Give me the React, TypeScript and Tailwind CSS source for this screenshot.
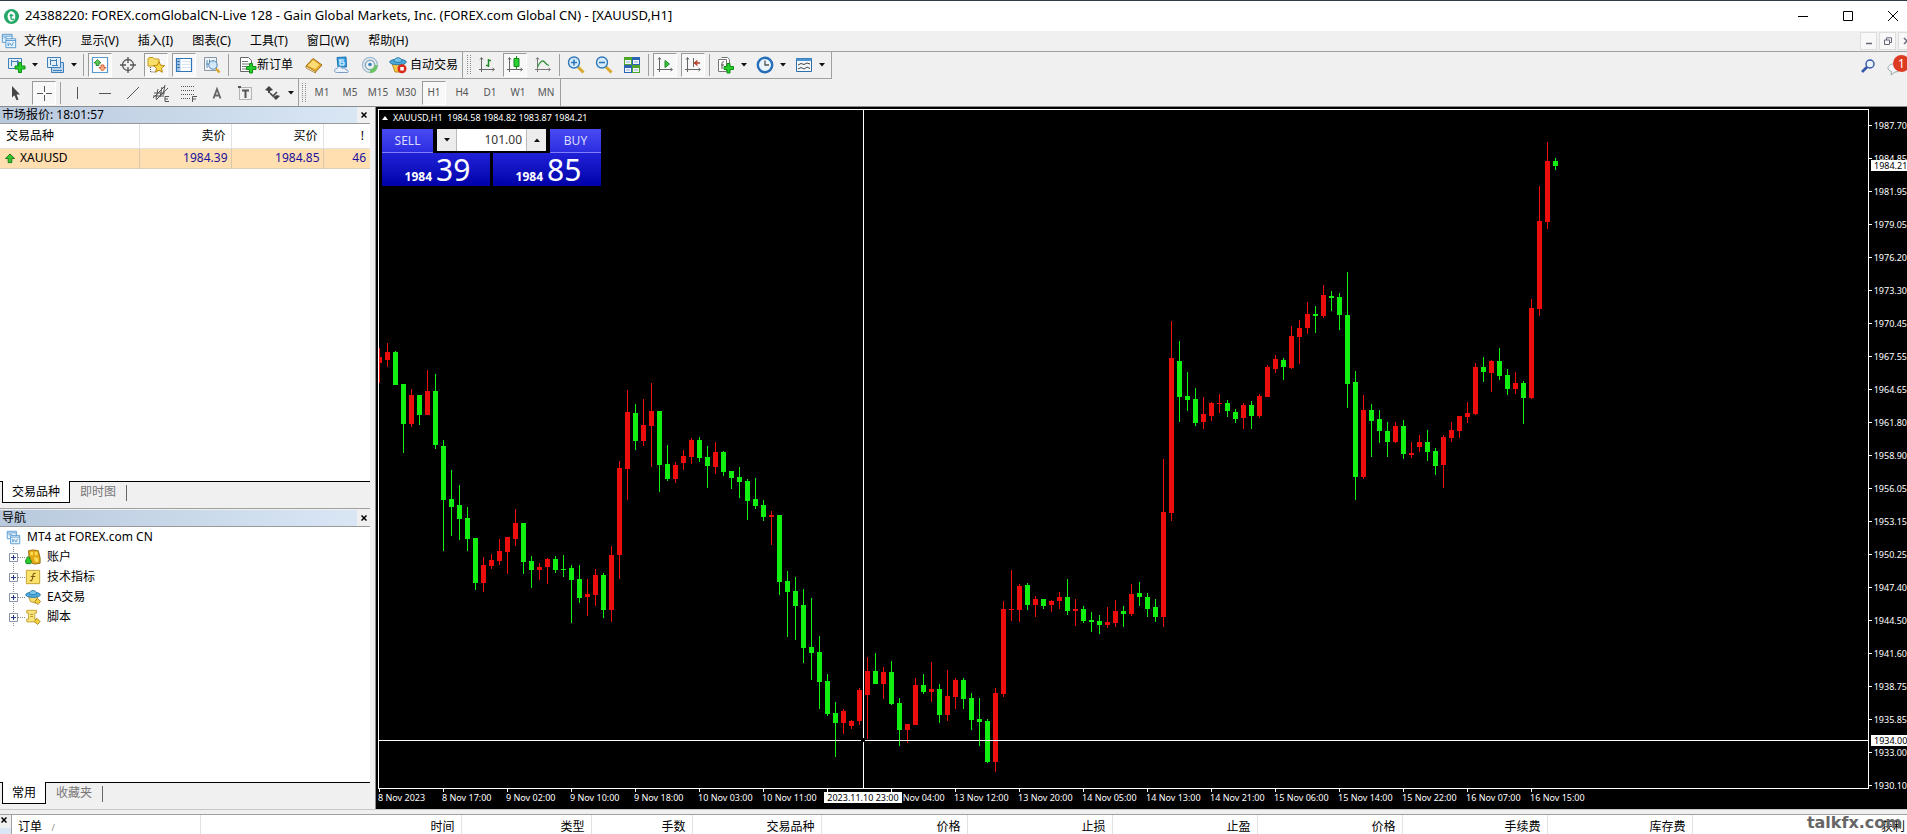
import type { ReactNode } from "react";

type Dir = "up" | "down";
type Candle = [high: number, top: number, bottom: number, low: number, dir: Dir];

const PLOT_TOP = 110;
const STEP = 8;

// one entry per hour, in screen rows
const candles: Candle[] = [
  [348, 357, 363, 383, "up"], [343, 352, 360, 367, "up"], [351, 352, 385, 385, "down"], [384, 384, 424, 453, "down"],
  [389, 395, 424, 427, "up"], [395, 395, 415, 425, "down"], [370, 391, 415, 415, "up"], [374, 391, 445, 449, "down"],
  [440, 446, 500, 551, "down"], [470, 499, 507, 536, "down"], [485, 505, 519, 540, "down"], [507, 518, 539, 551, "down"],
  [538, 538, 583, 590, "down"], [557, 565, 583, 592, "up"], [554, 560, 566, 569, "up"], [539, 551, 561, 565, "up"],
  [537, 537, 552, 574, "up"], [509, 523, 539, 546, "up"], [523, 523, 562, 574, "down"], [556, 561, 570, 588, "down"],
  [563, 567, 570, 580, "up"], [558, 559, 567, 584, "up"], [556, 559, 570, 573, "down"], [555, 569, 570, 577, "down"],
  [565, 568, 580, 623, "down"], [565, 579, 598, 603, "down"], [579, 594, 597, 616, "up"], [569, 575, 595, 606, "up"],
  [573, 575, 610, 618, "down"], [546, 555, 610, 622, "up"], [461, 468, 555, 579, "up"], [390, 412, 469, 500, "up"],
  [404, 413, 441, 450, "down"], [399, 425, 441, 446, "up"], [383, 411, 426, 467, "up"], [411, 411, 465, 492, "down"],
  [445, 464, 479, 481, "down"], [462, 465, 479, 483, "up"], [450, 456, 463, 470, "up"], [438, 440, 457, 464, "up"],
  [437, 440, 458, 462, "down"], [446, 457, 466, 488, "down"], [442, 452, 467, 474, "up"], [451, 452, 472, 476, "down"],
  [471, 471, 478, 489, "down"], [467, 477, 482, 498, "down"], [479, 481, 501, 520, "down"], [478, 499, 506, 509, "down"],
  [500, 505, 517, 521, "down"], [511, 515, 517, 545, "up"], [515, 515, 582, 595, "down"], [571, 581, 592, 637, "down"],
  [577, 591, 606, 640, "down"], [589, 605, 648, 663, "down"], [598, 647, 653, 680, "down"], [636, 652, 682, 709, "down"],
  [674, 681, 714, 716, "down"], [702, 713, 723, 757, "down"], [709, 711, 723, 734, "up"], [720, 721, 726, 729, "up"],
  [688, 690, 721, 725, "up"], [657, 671, 695, 739, "up"], [653, 671, 684, 684, "down"], [667, 672, 684, 699, "up"],
  [661, 672, 704, 705, "down"], [698, 703, 730, 746, "down"], [724, 724, 730, 743, "up"], [678, 685, 725, 725, "up"],
  [674, 685, 692, 694, "down"], [662, 689, 692, 702, "up"], [684, 689, 715, 723, "down"], [670, 696, 715, 721, "up"],
  [678, 680, 697, 709, "up"], [678, 680, 699, 709, "down"], [693, 698, 720, 730, "down"], [698, 719, 722, 746, "down"],
  [719, 721, 762, 763, "down"], [688, 693, 762, 772, "up"], [601, 609, 694, 697, "up"], [570, 609, 610, 621, "up"],
  [584, 586, 610, 622, "up"], [583, 585, 605, 610, "down"], [596, 599, 605, 617, "up"], [599, 599, 606, 609, "down"],
  [600, 601, 605, 612, "up"], [592, 597, 601, 609, "up"], [579, 597, 611, 615, "down"], [599, 609, 611, 626, "up"],
  [606, 609, 621, 623, "down"], [612, 620, 622, 632, "down"], [615, 621, 625, 634, "down"], [607, 622, 625, 628, "up"],
  [600, 611, 623, 627, "up"], [606, 611, 614, 627, "down"], [584, 594, 614, 616, "up"], [582, 593, 597, 606, "down"],
  [593, 597, 609, 617, "down"], [599, 607, 617, 622, "down"], [459, 512, 617, 627, "up"], [321, 358, 513, 521, "up"],
  [341, 361, 397, 422, "down"], [372, 396, 400, 411, "down"], [388, 399, 423, 426, "down"], [397, 414, 422, 429, "up"],
  [402, 403, 416, 421, "up"], [394, 403, 404, 413, "up"], [400, 403, 411, 417, "down"], [409, 412, 419, 423, "down"],
  [403, 405, 418, 429, "up"], [401, 405, 416, 429, "down"], [394, 396, 416, 418, "up"], [365, 367, 397, 397, "up"],
  [355, 359, 369, 373, "up"], [358, 360, 367, 380, "down"], [326, 336, 368, 369, "up"], [320, 328, 337, 364, "up"],
  [302, 314, 328, 334, "up"], [306, 314, 316, 333, "down"], [285, 295, 316, 318, "up"], [291, 296, 298, 311, "down"],
  [293, 297, 315, 330, "down"], [272, 315, 384, 408, "down"], [371, 382, 477, 500, "down"], [395, 410, 477, 479, "up"],
  [404, 410, 421, 457, "down"], [410, 419, 431, 443, "down"], [422, 431, 442, 457, "down"], [422, 426, 442, 443, "up"],
  [420, 426, 454, 459, "down"], [442, 453, 455, 458, "up"], [435, 442, 447, 452, "up"], [430, 442, 452, 461, "down"],
  [448, 451, 466, 475, "down"], [435, 437, 465, 488, "up"], [422, 430, 438, 442, "up"], [416, 416, 431, 438, "up"],
  [402, 413, 417, 423, "up"], [363, 367, 414, 415, "up"], [357, 367, 372, 382, "down"], [360, 361, 373, 392, "up"],
  [348, 361, 376, 380, "down"], [369, 375, 389, 395, "down"], [372, 383, 389, 394, "up"], [381, 383, 398, 424, "down"],
  [299, 308, 398, 399, "up"], [186, 221, 309, 316, "up"], [142, 161, 222, 229, "up"], [158, 161, 166, 170, "down"],
];

const prices = [
  "1987.70", "1984.85", "1981.95", "1979.05", "1976.20", "1973.30", "1970.45",
  "1967.55", "1964.65", "1961.80", "1958.90", "1956.05", "1953.15", "1950.25",
  "1947.40", "1944.50", "1941.60", "1938.75", "1935.85", "1933.00", "1930.10",
];

const times = [
  "8 Nov 2023", "8 Nov 17:00", "9 Nov 02:00", "9 Nov 10:00", "9 Nov 18:00",
  "10 Nov 03:00", "10 Nov 11:00", "10 Nov 19:00", "13 Nov 04:00", "13 Nov 12:00",
  "13 Nov 20:00", "14 Nov 05:00", "14 Nov 13:00", "14 Nov 21:00", "15 Nov 06:00",
  "15 Nov 14:00", "15 Nov 22:00", "16 Nov 07:00", "16 Nov 15:00",
];

const menus = ["文件(F)", "显示(V)", "插入(I)", "图表(C)", "工具(T)", "窗口(W)", "帮助(H)"];
const periods = ["M1", "M5", "M15", "M30", "H1", "H4", "D1", "W1", "MN"];

const navTree = [
  { label: "账户", icon: "accounts" },
  { label: "技术指标", icon: "indicator" },
  { label: "EA交易", icon: "expert" },
  { label: "脚本", icon: "script" },
];

const orderColumns = [
  { label: "时间", width: "w-[261px]" },
  { label: "类型", width: "w-[130px]" },
  { label: "手数", width: "w-[101px]" },
  { label: "交易品种", width: "w-[129px]" },
  { label: "价格", width: "w-[146px]" },
  { label: "止损", width: "w-[145px]" },
  { label: "止盈", width: "w-[145px]" },
  { label: "价格", width: "w-[145px]" },
  { label: "手续费", width: "w-[145px]" },
  { label: "库存费", width: "w-[145px]" },
];

const icons: Record<string, ReactNode> = {
  windows: (
    <g fill="#e8f3fc" stroke="#4c93cc">
      <path d="M1.500 1.500h11v9h-11z" />
      <path d="M1.500 3.500h11M3 6l2-1 2 1" fill="none" />
      <path d="M5.500 6.500h11v10h-11z" />
      <path d="M5.500 8.500h11M8 10.500v4l2-3 2 3 2-4" fill="none" />
    </g>
  ),
  newChart: (
    <>
      <path d="M.5 2.500h13v10H.5z" fill="#e3effa" stroke="#3f7fb5" />
      <path d="M3.500 4v6M3 5.500h8M9.500 4v6" stroke="#3f7fb5" fill="none" />
      <path d="M10.500 6.500h3v3.500h3.500v3h-3.500v3.500h-3V13H7v-3h3.500z" fill="#25d02c" stroke="#118c17" />
    </>
  ),
  profiles: (
    <>
      <path d="M4.500 6.500h12v10h-12z" fill="#b9d7f0" stroke="#3f7fb5" />
      <path d="M.5 1.500h13v10H.5z" fill="#e3effa" stroke="#3f7fb5" />
      <path d="M3.500 3v6M3 4.500h7M9.500 3v6M5 9.500h6M6 14.500h9" stroke="#3f7fb5" fill="none" />
    </>
  ),
  market: (
    <>
      <path d="M1.500 1.500h15v15h-15z" fill="#fff" stroke="#5a9bd4" strokeWidth="1.200" />
      <path d="M6.500 3.500l3.500 3.500H8v2.500H5V7H3z" fill="#5cc95a" stroke="#157c19" strokeWidth=".8" />
      <path d="M11.500 15l-3.500-3.500h2V9h3v2.500h2z" fill="#fbb084" stroke="#c7451a" strokeWidth=".8" />
    </>
  ),
  target: (
    <g fill="none" stroke="#555" strokeWidth="1.300">
      <circle cx="9" cy="9" r="5.500" />
      <path d="M9 1v6M9 11v6M1 9h6M11 9h6" />
    </g>
  ),
  folderStar: (
    <>
      <path d="M1 3l1-1.500h4L7.500 3H12v7H1z" fill="#f8de6a" stroke="#c59a1c" />
      <path d="M3.500 11v5h5" stroke="#555" strokeDasharray="1 1" fill="none" />
      <path d="M12 5.500l1.600 3.700 3.900.4-3 2.700.9 4-3.400-2.100-3.500 2.100 1-4-3-2.700 3.900-.4z" fill="#fbd84a" stroke="#b9880f" />
    </>
  ),
  terminal: (
    <>
      <path d="M1.500 2.500h15v13h-15z" fill="#fff" stroke="#2f73b8" strokeWidth="1.200" />
      <path d="M2 3h3.500v12H2z" fill="#9cc3e8" />
      <path d="M7 5.500h9M7 8.500h9M7 11.500h9" stroke="#d8e5f2" />
      <path d="M2.500 5.500h2M2.500 8.500h2M2.500 11.500h2" stroke="#24588f" />
    </>
  ),
  tester: (
    <>
      <path d="M1.500 1.500h12v13h-12z" fill="#f1f4f7" stroke="#8796a5" />
      <path d="M4 4v8M3 8h3M6.500 3.500v3M10 4v4" stroke="#5a8cb5" fill="none" />
      <circle cx="10" cy="9" r="4.200" fill="#cfe7fb" fillOpacity=".85" stroke="#5588bb" />
      <path d="M13 12.500l3.500 4" stroke="#dba82c" strokeWidth="2.400" />
    </>
  ),
  newOrder: (
    <>
      <path d="M1.500 1.500h8l3 3v11h-11z" fill="#fff" stroke="#666" />
      <path d="M3 5.500h6M3 8h7M3 10.500h4M3 13h4" stroke="#777" />
      <path d="M10.500 7.500h3v3h3.500v3h-3.500v3.500h-3V13.500H7.500v-3h3z" fill="#25d02c" stroke="#118c17" />
    </>
  ),
  book: (
    <>
      <path d="M1 10l7-7.500 9 6.500-6.500 7z" fill="#e9ae2e" stroke="#9b6810" />
      <path d="M3 9.500l5.200-5.200 6 4.400-4 4.300z" fill="#fbdc77" />
      <path d="M1 10v2l9.500 5v-1.500z" fill="#fff2c0" stroke="#9b6810" strokeWidth=".7" />
    </>
  ),
  vps: (
    <>
      <path d="M4 1.500l9-.5.500 10H5z" fill="#3aa3e6" stroke="#1d71ae" />
      <path d="M6 4h5M7 4v5h4V6H7" stroke="#fff" fill="none" />
      <path d="M3.500 16.500c-3-.5-2.500-4 .5-4 1-2.500 4-2.500 5 0 2-1 4 0 4 1.500 3 0 3 2.500 1 2.500z" fill="#e9f1fa" stroke="#7d9cc4" />
    </>
  ),
  signal: (
    <>
      <circle cx="9" cy="9" r="7.500" fill="none" stroke="#a9bfd4" strokeWidth="1.500" />
      <circle cx="9" cy="9" r="4.700" fill="none" stroke="#7fa9c4" strokeWidth="1.500" />
      <path d="M9 9v8c5 0 7.500-3 7.500-8l-3 0c0 3-1.500 4-4.500 4z" fill="#6fc466" />
      <circle cx="9" cy="8.500" r="1.800" fill="#3b82b8" />
    </>
  ),
  autoTrade: (
    <>
      <path d="M3 7.500l3 8.500h6l3-8.500z" fill="#f5c944" stroke="#b68a17" />
      <ellipse cx="9" cy="6" rx="8.300" ry="2.800" fill="#4fa9da" stroke="#2a7aab" />
      <path d="M5 5.500c0-5 8-5 8 0-2 1.200-6 1.200-8 0z" fill="#7cc6ec" stroke="#2a7aab" />
      <circle cx="13" cy="12.700" r="4.500" fill="#d92a1c" />
      <path d="M11.300 11h3.500v3.500h-3.500z" fill="#fff" />
    </>
  ),
  bars: (
    <>
      <path d="M3.500 2v14M1 13.500h15M2 3.500l1.500-2L5 3.500M14.500 12l2 1.500-2 1.500" stroke="#666" fill="none" />
      <path d="M10.500 3v8M8 9.500h2.500M10.500 4.500H13" stroke="#238a2b" strokeWidth="1.500" fill="none" />
    </>
  ),
  candle: (
    <>
      <path d="M3.500 2v14M1 13.500h15M2 3.500l1.500-2L5 3.500M14.500 12l2 1.500-2 1.500" stroke="#666" fill="none" />
      <path d="M10.500 0v13" stroke="#178a1e" />
      <path d="M8 2.500h5v8H8z" fill="#27cf31" stroke="#148a1a" />
    </>
  ),
  line: (
    <>
      <path d="M3.500 2v14M1 13.500h15M2 3.500l1.500-2L5 3.500M14.500 12l2 1.500-2 1.500" stroke="#777" fill="none" />
      <path d="M3.500 11c2-5 5-7.500 7-5 1.500 2 3 3 4.500 3.500" stroke="#3a9440" strokeWidth="1.300" fill="none" />
    </>
  ),
  zoomIn: (
    <>
      <path d="M11 11l5.500 5.500" stroke="#d9a92d" strokeWidth="3" />
      <circle cx="7" cy="6.500" r="5.500" fill="#d6ecfd" stroke="#2f78b8" strokeWidth="1.400" />
      <path d="M4 6.500h6M7 3.500v6" stroke="#2f78b8" strokeWidth="1.600" />
    </>
  ),
  zoomOut: (
    <>
      <path d="M11 11l5.500 5.500" stroke="#d9a92d" strokeWidth="3" />
      <circle cx="7" cy="6.500" r="5.500" fill="#d6ecfd" stroke="#2f78b8" strokeWidth="1.400" />
      <path d="M4 6.500h6" stroke="#2f78b8" strokeWidth="1.600" />
    </>
  ),
  tiles: (
    <>
      <path d="M1 1h8v8H1zM9 9h8v8H9z" fill="#4fa52a" />
      <path d="M9 1h8v8H9zM1 9h8v8H1z" fill="#2d62b5" />
      <path d="M2 4h6v4H2zM10 4h6v4h-6zM2 12h6v4H2zM10 12h6v4h-6z" fill="#eef5fb" />
      <path d="M3 6h4M11 6h4M3 14h4M11 14h4" stroke="#9ab4cf" />
    </>
  ),
  autoScroll: (
    <>
      <path d="M3.500 2v14M1 13.500h15M2 3.500l1.500-2L5 3.500M14.500 12l2 1.500-2 1.500" stroke="#666" fill="none" />
      <path d="M9 4.500l4.500 3.500L9 11.500z" fill="#3cc344" stroke="#1a8a20" />
    </>
  ),
  shift: (
    <>
      <path d="M3.500 2v14M1 13.500h15M2 3.500l1.500-2L5 3.500M14.500 12l2 1.500-2 1.500M9.500 2v9" stroke="#666" fill="none" />
      <path d="M10.500 7H16M13.500 4.500L10.500 7l3 2.500" stroke="#b33a20" strokeWidth="1.300" fill="none" />
    </>
  ),
  addIndicator: (
    <>
      <path d="M1.500 3.500h8v12h-8zM4.500 1.500h6l2 2v9" fill="#fff" stroke="#777" />
      <path d="M7 6c-2-1-2 1-2 3v4M4 9h3" stroke="#555" fill="none" />
      <path d="M10 7.500h3v3h3.500v3H13v3.500h-3v-3.500H7v-3h3z" fill="#25d02c" stroke="#118c17" />
    </>
  ),
  clock: (
    <>
      <circle cx="9" cy="9" r="7.200" fill="#eaf4fc" stroke="#266eb8" strokeWidth="2.400" />
      <path d="M9 4.500V9h4" stroke="#555" strokeWidth="1.300" fill="none" />
    </>
  ),
  template: (
    <>
      <path d="M1.500 2.500h15v13h-15z" fill="#f3f8fc" stroke="#2f6da8" />
      <path d="M1.500 2.500h15v2.500h-15z" fill="#4c93d2" />
      <path d="M3 9l3-1.500 3 1 3-1.500 3 1M3 13l3-1.500 3 1.500 3-2 3 1.500" stroke="#444" fill="none" />
    </>
  ),
  cursor: <path d="M5 2l8 8.500H9.500l2 5-2 .8-2-5L5 13.500z" fill="#444" />,
  cross: <path d="M9.500 2v6M9.500 11v6M2 9.500h6M11 9.500h6" stroke="#555" />,
  vline: <path d="M9.500 3v12" stroke="#555" />,
  hline: <path d="M3 9.500h12" stroke="#555" />,
  trend: <path d="M3 15L15 3" stroke="#555" />,
  channel: (
    <>
      <path d="M1 14L13 2M4 16L16 4M2 9h11M1 12h11M6 5l-2 10M10 3L8 13M13 1l-2 10" stroke="#555" fill="none" />
      <path d="M17 12.500h-4v5h4M13 15h3" stroke="#555" fill="none" />
    </>
  ),
  fibo: (
    <>
      <path d="M1 2.500h14M1 6.500h14M1 10.500h14M1 14.500h9" stroke="#555" strokeDasharray="1 1" fill="none" />
      <path d="M17 12.500h-4.500V18M12.500 15H16" stroke="#555" fill="none" />
    </>
  ),
  text: <path d="M5.500 14.500L9 5l3.500 9.500M7 11.500h4" stroke="#666" strokeWidth="1.800" fill="none" />,
  label: (
    <>
      <path d="M3.500 3.500h12v12h-12z" stroke="#777" strokeDasharray="1 1" fill="none" />
      <path d="M6 6.500h7M9.500 6v8" stroke="#555" strokeWidth="2" />
      <path d="M2 2h3v2H2z" fill="#555" />
    </>
  ),
  arrows: (
    <>
      <path d="M1 6l4-4 4 4-3 1v2H4V7zM9 13l3 3 4-4-3-1" fill="#444" />
      <path d="M6 9l3 3 4-4" stroke="#444" strokeWidth="1.600" fill="none" />
    </>
  ),
  accounts: (
    <>
      <path d="M4 2l5-1 6 1 2 8v6l-6 1-6-2z" fill="#e2a714" stroke="#94690a" />
      <path d="M6 3h3v4H6zM11 3h3v4h-3zM10 9l5 1v5l-4-1z" fill="#fbdc55" />
      <path d="M2 9.500c2-2 4 0 3.500 2 2 1 2 4 .5 5H1.500C0 15 .5 12 2 11z" fill="#2cc92f" stroke="#15801a" />
    </>
  ),
  indicator: (
    <>
      <path d="M1.500 1.500h15v15h-15z" fill="#fbe26a" stroke="#c19a28" />
      <path d="M12 5c-2.500-1-3 1-3.300 4S7.500 14 5.500 13M6.500 8.500h5" stroke="#7a5a10" strokeWidth="1.200" fill="none" />
    </>
  ),
  expert: (
    <>
      <path d="M4 8l2 6 6 2 2-7z" fill="#f6dc6f" stroke="#b6922b" />
      <ellipse cx="9" cy="6.500" rx="8.300" ry="3" fill="#4fa9da" stroke="#2a7aab" />
      <path d="M5 5.500c0-5 8-5 8 0-2 1.200-6 1.200-8 0z" fill="#7cc6ec" stroke="#2a7aab" />
      <path d="M14 10.500l3.500 3.500-3 3.500L11 14z" fill="#f2cf3c" stroke="#a98418" />
    </>
  ),
  script: (
    <>
      <path d="M2 1.500h11v3h-2v7h2v3H2v-3h2v-7H2z" fill="#fae57c" stroke="#bf9c2d" />
      <path d="M6 6h3M6 8.500h3" stroke="#a98418" />
      <path d="M13.500 10.500L17 14l-3 3.500L10.500 14z" fill="#f2cf3c" stroke="#a98418" />
    </>
  ),
};

function Icon({ name, className = "h-[18px] w-[18px]" }: { name: string; className?: string }) {
  return (
    <svg viewBox="0 0 18 18" className={`shrink-0 ${className}`} aria-hidden="true">
      {icons[name]}
    </svg>
  );
}

function Caret() {
  return (
    <svg viewBox="0 0 6 4" className="h-[4px] w-[6px] shrink-0" aria-hidden="true">
      <path d="M0 0h6L3 3.500z" fill="#111" />
    </svg>
  );
}

function Tool({ name, active = false }: { name: string; active?: boolean }) {
  return (
    <button
      type="button"
      aria-label={name}
      aria-pressed={active}
      className={`flex h-6 w-6 items-center justify-center ${
        active ? "border border-r-white border-b-white border-t-[#9a9a9a] border-l-[#9a9a9a] bg-[#f8f8f8]" : ""
      }`}
    >
      <Icon name={name} />
    </button>
  );
}

function DropTool({ name }: { name: string }) {
  return (
    <button type="button" aria-label={name} className="flex h-6 w-[35px] items-center justify-between pl-[3px] pr-[2px]">
      <Icon name={name} />
      <Caret />
    </button>
  );
}

function Grip() {
  return (
    <svg className="h-5 w-[5px] shrink-0" aria-hidden="true">
      <path d="M1.500 0v20M4.500 0v20" stroke="#8c8c8c" strokeDasharray="1 1" />
    </svg>
  );
}

function Divider() {
  return <span className="h-[22px] w-px shrink-0 bg-[#a0a0a0]" />;
}

function PaneHeader({ title }: { title: string }) {
  return (
    <div className="flex h-4 shrink-0 items-center">
      <h2 className="h-full flex-1 whitespace-pre bg-linear-to-r from-[#b9c9dd] to-[#d9e7f5] pl-[2px] text-[12px] leading-4">
        {title}
      </h2>
      <button type="button" aria-label="关闭" className="flex h-4 w-[13px] items-center justify-center">
        <svg viewBox="0 0 6 6" className="h-[6px] w-[6px]">
          <path d="M.5.5l5 5M5.500.5l-5 5" stroke="#000" strokeWidth="1.500" />
        </svg>
      </button>
    </div>
  );
}

function PaneTabs({ tabs }: { tabs: string[] }) {
  return (
    <div className="flex h-[27px] shrink-0 bg-[#f0f0f0]">
      <span className="w-[2px] border-t border-black" />
      <button type="button" className="h-[22px] border-x border-b border-black bg-white px-[9px] text-[12px] leading-4">
        {tabs[0]}
      </button>
      <div className="flex flex-1 items-start border-t border-black">
        <button type="button" className="h-[20px] px-[10px] text-[12px] leading-[20px] text-[#777]">
          {tabs[1]}
        </button>
        <span className="mt-[3px] h-4 w-px bg-[#666]" />
      </div>
    </div>
  );
}

function TitleBar() {
  return (
    <header className="flex h-[31px] shrink-0 items-center border-t border-[#2b3b48] bg-white pl-[3px] pr-[9px]">
      <svg viewBox="0 0 18 18" className="h-[17px] w-[17px]" aria-hidden="true">
        <circle cx="9" cy="9" r="8" fill="#25a768" />
        <path d="M8 3.500c-4 2-4.500 8.500 0 11 3.500 0 5-2.500 5-5.500S11.500 3.500 8 3.500z" fill="#fff" />
        <path d="M8.500 6v5c.5 1.500 2 1.500 3 .5M7 8h4" stroke="#25a768" strokeWidth="1.500" fill="none" />
      </svg>
      <h1 className="ml-[5px] flex-1 text-[13px]">
        24388220: FOREX.comGlobalCN-Live 128 - Gain Global Markets, Inc. (FOREX.com Global CN) - [XAUUSD,H1]
      </h1>
      <div className="flex items-center gap-[35px]">
        <button type="button" aria-label="最小化">
          <svg viewBox="0 0 10 10" className="h-[10px] w-[10px]"><path d="M0 5.500h10" stroke="#000" /></svg>
        </button>
        <button type="button" aria-label="最大化">
          <svg viewBox="0 0 10 10" className="h-[10px] w-[10px]"><path d="M.5.5h9v9h-9z" fill="none" stroke="#000" /></svg>
        </button>
        <button type="button" aria-label="关闭窗口">
          <svg viewBox="0 0 10 10" className="h-[10px] w-[10px]"><path d="M0 0l10 10M10 0L0 10" stroke="#000" /></svg>
        </button>
      </div>
    </header>
  );
}

function MenuBar() {
  return (
    <div className="flex h-[21px] shrink-0 items-center border-b border-[#a0a0a0] pl-[1px]">
      <Icon name="windows" className="h-[16px] w-[16px]" />
      <nav className="ml-[7px] flex flex-1 gap-[19px] text-[12px]">
        {menus.map((m) => (
          <button type="button" key={m} className="leading-5">
            {m}
          </button>
        ))}
      </nav>
      <div className="-mr-[8px] flex gap-[2px]">
        <button type="button" aria-label="最小化图表" className="flex h-[18px] w-[17px] items-center justify-center border border-[#ddd] bg-[#f8f8f8]">
          <svg viewBox="0 0 8 8" className="h-2 w-2"><path d="M1 6.500h6" stroke="#667" strokeWidth="1.500" /></svg>
        </button>
        <button type="button" aria-label="还原图表" className="flex h-[18px] w-[17px] items-center justify-center border border-[#ddd] bg-[#f8f8f8]">
          <svg viewBox="0 0 8 8" className="h-2 w-2"><path d="M.5 3h5v4.500h-5zM2.500 3V.8h5v4.700H5.500" fill="none" stroke="#667" /></svg>
        </button>
        <button type="button" aria-label="关闭图表" className="flex h-[18px] w-[17px] items-center justify-center border border-[#ddd] bg-[#f8f8f8]">
          <svg viewBox="0 0 8 8" className="h-2 w-2"><path d="M1 1l6 6M7 1L1 7" stroke="#667" strokeWidth="1.500" /></svg>
        </button>
      </div>
    </div>
  );
}

function MainToolbar() {
  return (
    <div className="flex h-[27px] shrink-0 items-center">
      <div className="flex h-full items-center gap-[4px] border-r border-b border-[#a0a0a0] pl-[5px] pr-[4px]">
        <DropTool name="newChart" />
        <DropTool name="profiles" />
        <Divider />
        <Tool name="market" active />
        <Tool name="target" />
        <Tool name="folderStar" active />
        <Tool name="terminal" active />
        <Tool name="tester" />
        <Divider />
        <button type="button" className="ml-[6px] flex h-6 items-center text-[12px]">
          <Icon name="newOrder" />
          新订单
        </button>
        <span className="w-px" />
        <Tool name="book" />
        <Tool name="vps" />
        <Tool name="signal" />
        <button type="button" className="flex h-6 items-center gap-[3px] pl-[3px] text-[12px]">
          <Icon name="autoTrade" />
          自动交易
        </button>
      </div>
      <div className="flex h-full items-center gap-[4px] border-r border-b border-[#a0a0a0] pl-[3px] pr-[4px]">
        <Grip />
        <Tool name="bars" />
        <Tool name="candle" active />
        <Tool name="line" />
        <Divider />
        <Tool name="zoomIn" />
        <Tool name="zoomOut" />
        <Tool name="tiles" />
        <Divider />
        <Tool name="autoScroll" active />
        <Tool name="shift" active />
        <Divider />
        <DropTool name="addIndicator" />
        <DropTool name="clock" />
        <DropTool name="template" />
      </div>
      <div className="ml-auto flex items-center gap-[12px]">
        <button type="button" aria-label="搜索">
          <svg viewBox="0 0 14 14" className="h-[14px] w-[14px]">
            <circle cx="9" cy="5" r="4" fill="#eaf2fb" stroke="#3257a8" strokeWidth="1.400" />
            <path d="M6 8l-5 5" stroke="#3257a8" strokeWidth="2.600" />
          </svg>
        </button>
        <button type="button" aria-label="通知" className="-mr-[3px] flex items-center">
          <svg viewBox="0 0 14 14" className="-mr-[8px] mt-[6px] h-[14px] w-[14px]">
            <path d="M7 2c8 0 8 8 1 8l-4 3 .5-3.500C-1 8 0 2 7 2z" fill="#f4f6f8" stroke="#9aa" />
          </svg>
          <span className="-mt-[4px] h-[17px] w-[17px] rounded-full bg-[#dd3a22] text-center text-[12px] leading-[17px] text-white">1</span>
        </button>
      </div>
    </div>
  );
}

function DrawToolbar() {
  return (
    <div className="flex h-[28px] shrink-0 items-center border-b border-[#8c8c8c]">
      <div className="flex h-full items-center gap-[4px] border-r border-[#a0a0a0] pl-[4px] pr-[2px]">
        <Tool name="cursor" />
        <Tool name="cross" active />
        <Divider />
        <Tool name="vline" />
        <Tool name="hline" />
        <Tool name="trend" />
        <Tool name="channel" />
        <Tool name="fibo" />
        <Tool name="text" />
        <Tool name="label" />
        <DropTool name="arrows" />
      </div>
      <div className="flex h-full items-center gap-[4px] border-r border-[#a0a0a0] pl-[2px] pr-[2px]">
        <Grip />
        {periods.map((p) => (
          <button
            type="button"
            key={p}
            className={`flex h-6 w-6 items-center justify-center text-[10px] text-[#555] ${
              p === "H1" ? "border border-r-white border-b-white border-t-[#9a9a9a] border-l-[#9a9a9a] bg-[#f8f8f8]" : ""
            }`}
          >
            {p}
          </button>
        ))}
      </div>
    </div>
  );
}

function MarketWatch() {
  return (
    <section className="flex h-[402px] shrink-0 flex-col border-b border-[#a0a0a0]">
      <PaneHeader title="市场报价: 18:01:57" />
      <div className="flex-1 border-t border-[#999] bg-white">
        <table className="w-full table-fixed border-collapse text-[12px] leading-4">
          <thead>
            <tr className="h-6 border-b border-[#e2e2e2]">
              <th className="w-[139px] border-r border-[#e2e2e2] pl-[6px] text-left font-normal">交易品种</th>
              <th className="w-[92px] border-r border-[#e2e2e2] pr-[5px] text-right font-normal">卖价</th>
              <th className="w-[92px] border-r border-[#e2e2e2] pr-[5px] text-right font-normal">买价</th>
              <th className="pr-[6px] text-right font-normal">!</th>
            </tr>
          </thead>
          <tbody>
            <tr className="h-5 border-b border-[#ddd0bd] bg-[#ffdfb0] text-[#1a0f9c]">
              <td className="border-r border-[#d8c8ae] pl-[4px] text-black">
                <span className="flex items-center gap-[4px]">
                  <svg viewBox="0 0 12 12" className="h-[11px] w-[12px]" aria-hidden="true">
                    <path d="M6 1l5 5H8v4.500H4V6H1z" fill="#35c42f" stroke="#14761a" />
                  </svg>
                  XAUUSD
                </span>
              </td>
              <td className="border-r border-[#d8c8ae] pr-[3px] text-right">1984.39</td>
              <td className="border-r border-[#d8c8ae] pr-[3px] text-right">1984.85</td>
              <td className="pr-[4px] text-right">46</td>
            </tr>
          </tbody>
        </table>
      </div>
      <PaneTabs tabs={["交易品种", "即时图"]} />
    </section>
  );
}

function Navigator() {
  return (
    <section className="flex min-h-0 flex-1 flex-col pt-[1px]">
      <PaneHeader title="导航" />
      <div className="flex-1 border-t border-[#999] bg-white pl-[6px] text-[12px]">
        <div className="flex h-5 items-center gap-[6px]">
          <Icon name="windows" className="h-[15px] w-[15px]" />
          MT4 at FOREX.com CN
        </div>
        <ul>
          {navTree.map((node) => (
            <li key={node.label} className="flex h-5 items-center pl-[2px]">
              <svg className="h-5 w-[17px] shrink-0" aria-hidden="true">
                <path d="M5.500 0v20M10 10.500h7" stroke="#888" strokeDasharray="1 1" />
                <path d="M1.500 6.500h8v8h-8z" fill="#fff" stroke="#8796a8" />
                <path d="M3 10.500h5M5.500 8v5" stroke="#223a80" />
              </svg>
              <Icon name={node.icon} className="h-[16px] w-[16px]" />
              <span className="ml-[6px]">{node.label}</span>
            </li>
          ))}
        </ul>
      </div>
      <PaneTabs tabs={["常用", "收藏夹"]} />
    </section>
  );
}

function QuoteBox({ price, pips }: { price: string; pips: string }) {
  return (
    <button
      type="button"
      className="flex h-[33px] w-[108px] items-end justify-center gap-[4px] bg-linear-to-b from-[#2020d8] to-[#0000a8] pl-[3px] text-white"
    >
      <span className="text-[12px] font-bold leading-[19px]">{price}</span>
      <span className="text-[30px] leading-8">{pips}</span>
    </button>
  );
}

function OneClickPanel() {
  return (
    <div className="absolute left-[3px] top-[19px] w-[219px]">
      <div className="flex h-6 items-start">
        <button type="button" className="h-6 w-[51px] border-b border-[#8080ff] bg-linear-to-b from-[#4a4af4] to-[#2c2ce0] text-[12px] leading-[24px] text-[#dcdcff]">
          SELL
        </button>
        <div className="mx-[4px] flex h-[22px] flex-1 bg-white">
          <button type="button" aria-label="减少" className="flex w-5 items-center justify-center border-r border-[#bbb] bg-[#ececec]">
            <Caret />
          </button>
          <input
            aria-label="手数"
            defaultValue="101.00"
            className="w-0 flex-1 bg-white pr-[4px] text-right text-[12px] text-[#333] outline-none"
          />
          <button type="button" aria-label="增加" className="flex w-5 items-center justify-center border-l border-[#bbb] bg-[#ececec]">
            <span className="flex rotate-180">
              <Caret />
            </span>
          </button>
        </div>
        <button type="button" className="h-6 w-[51px] border-b border-[#8080ff] bg-linear-to-b from-[#4a4af4] to-[#2c2ce0] text-[12px] leading-[24px] text-[#dcdcff]">
          BUY
        </button>
      </div>
      <div className="flex justify-between">
        <QuoteBox price="1984" pips="39" />
        <QuoteBox price="1984" pips="85" />
      </div>
    </div>
  );
}

function Chart() {
  return (
    <section className="flex min-w-0 flex-1 flex-col overflow-hidden bg-black pl-[2px] pt-[2px] text-[9px] text-white">
      <div className="flex min-h-0 flex-1">
        <div className="relative min-w-0 flex-1 border border-white">
          <svg className="absolute inset-0 h-full w-full" shapeRendering="crispEdges" role="img" aria-label="XAUUSD H1">
            {candles.map(([high, top, bottom, low, dir], i) => {
              const x = i * STEP;
              const fill = dir === "up" ? "#ee0d0d" : "#12f012";
              return (
                <g key={i} fill={fill}>
                  <rect x={x} y={high - PLOT_TOP} width={1} height={low - high} />
                  <rect x={x - 2} y={top - PLOT_TOP} width={5} height={bottom - top} />
                </g>
              );
            })}
            <rect x={484} y={0} width={1} height="100%" fill="#fff" />
            <rect x={0} y={630} width="100%" height={1} fill="#fff" />
            <rect x={482} y={628} width={4} height={4} fill="#000" />
          </svg>
          <p className="absolute left-[3px] top-[2px] flex items-center gap-[5px] leading-3">
            <svg viewBox="0 0 6 4" className="h-[4px] w-[6px]" aria-hidden="true">
              <path d="M0 4h6L3 0z" fill="#fff" />
            </svg>
            <span className="whitespace-pre">XAUUSD,H1  1984.58 1984.82 1983.87 1984.21</span>
          </p>
          <OneClickPanel />
        </div>
        <div className="relative w-[38px] shrink-0">
          <div className="h-0">
            {prices.map((p) => (
              <div key={p} className="flex h-[33px] items-center gap-[2px]">
                <span className="h-px w-[3px] bg-white" />
                {p}
              </div>
            ))}
          </div>
          <span className="absolute right-0 top-[51px] h-[11px] w-9 bg-white pl-[3px] leading-[11px] text-black">1984.21</span>
          <span className="absolute right-0 top-[626px] h-[11px] w-9 bg-white pl-[3px] leading-[11px] text-black">1934.00</span>
        </div>
      </div>
      <div className="relative flex h-5 shrink-0">
        {times.map((t) => (
          <div key={t} className="w-16 shrink-0 whitespace-nowrap">
            <span className="ml-[1px] block h-[3px] w-px bg-white" />
            <span className="block leading-3">{t}</span>
          </div>
        ))}
        <span className="absolute left-[446px] top-[3px] h-[11px] w-[78px] bg-white text-center leading-[11px] text-black">
          2023.11.10 23:00
        </span>
      </div>
    </section>
  );
}

function Terminal() {
  return (
    <footer className="relative flex h-5 shrink-0 overflow-hidden border-t border-[#a0a0a0]">
      <div className="flex w-3 flex-col border-r border-[#a0a0a0]">
        <button type="button" aria-label="关闭终端" className="flex h-[9px] w-[7px] items-center justify-center">
          <svg viewBox="0 0 6 6" className="h-[6px] w-[6px]">
            <path d="M.5.5l5 5M5.500.5l-5 5" stroke="#000" strokeWidth="1.500" />
          </svg>
        </button>
        <span className="mt-[4px] flex-1 bg-[#d9e7f5]" />
      </div>
      <table className="w-full flex-1 table-fixed border-collapse bg-white text-[12px]">
        <thead>
          <tr className="h-6">
            <th className="w-[188px] whitespace-pre border-r border-[#e2e2e2] pl-[6px] text-left font-normal">
              订单   <span className="text-[9px] text-[#888]">/</span>
            </th>
            {orderColumns.map((c, i) => (
              <th key={i} className={`border-r border-[#e2e2e2] pr-[6px] text-right font-normal ${c.width}`}>
                {c.label}
              </th>
            ))}
            <th className="pr-[2px] text-right font-normal">获利</th>
          </tr>
        </thead>
      </table>
      <span className="absolute right-[5px] top-0 font-['DejaVu_Sans',sans-serif] text-[16px] font-bold leading-[16px] text-[#666]">
        talkfx.com
      </span>
    </footer>
  );
}

export default function App() {
  return (
    <div className="flex h-screen flex-col overflow-hidden bg-[#f0f0f0] font-['Noto_Sans','Noto_Sans_CJK_SC',sans-serif] text-black">
      <TitleBar />
      <MenuBar />
      <MainToolbar />
      <DrawToolbar />
      <main className="flex min-h-0 flex-1">
        <aside className="flex w-[370px] shrink-0 flex-col">
          <MarketWatch />
          <Navigator />
        </aside>
        <div className="w-[6px] shrink-0 border-r border-[#8c8c8c]" />
        <Chart />
      </main>
      <div className="h-[5px] shrink-0 border-t border-[#c8c8c8]" />
      <Terminal />
    </div>
  );
}
